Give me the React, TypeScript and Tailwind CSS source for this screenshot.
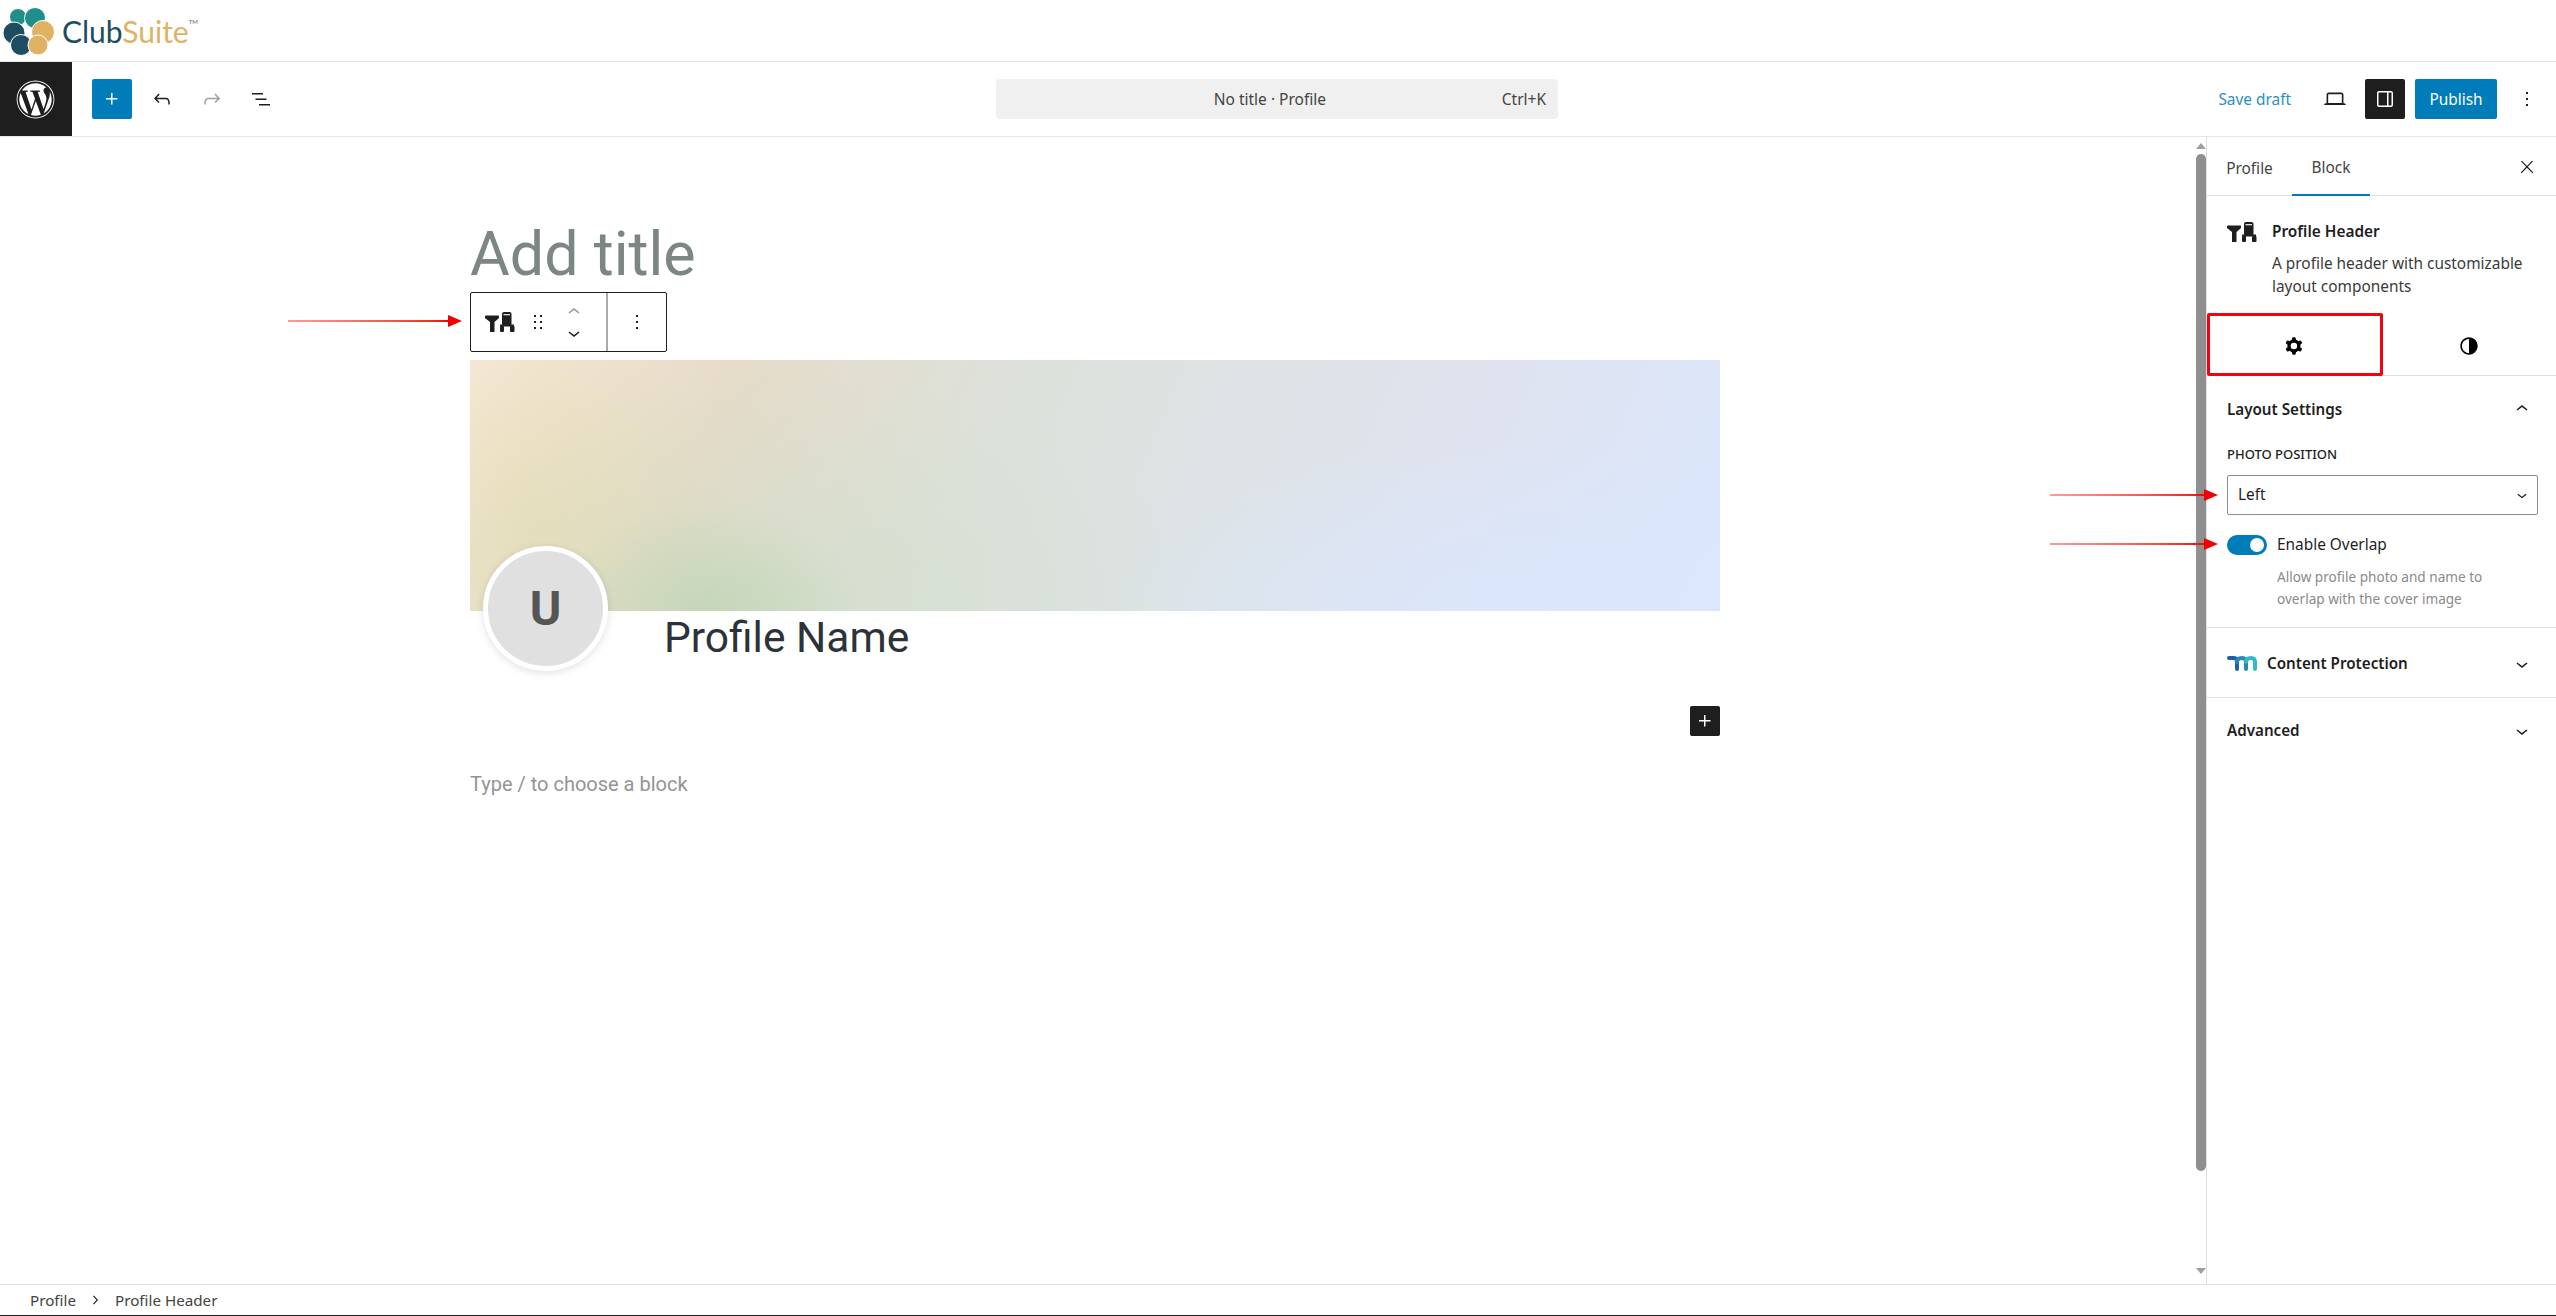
import type { ReactNode } from "react";
import { FaWordpress } from "react-icons/fa";

const ui = "font-['Noto_Sans','Open_Sans',sans-serif]";

function Icon({ d, size = 24, className = "" }: { d: string; size?: number; className?: string }) {
  return (
    <svg viewBox="0 0 24 24" width={size} height={size} fill="currentColor" className={className}>
      <path d={d} fillRule="evenodd" clipRule="evenodd" />
    </svg>
  );
}

const icons = {
  plus: "M11 12.5V17.5H12.5V12.5H17.5V11H12.5V6H11V11H6V12.5H11Z",
  undo: "M18.3 11.7c-.6-.6-1.4-.9-2.3-.9H6.7l2.9-3.3-1.1-1-4.5 5L8.5 16l1-1-2.7-2.7H16c.5 0 .9.2 1.3.5 1 1 1 3.4 1 4.5v.3h1.5v-.2c0-1.5 0-4.3-1.5-5.7z",
  redo: "M15.6 6.5l-1.1 1 2.9 3.3H8c-.9 0-1.7.3-2.3.9-1.4 1.5-1.4 4.2-1.4 5.6v.2h1.5v-.3c0-1.1 0-3.5 1-4.5.3-.3.7-.5 1.3-.5h9.2L14.5 15l1.1 1.1 4.6-4.6-4.6-5z",
  list: "M3 6h11v1.5H3V6Zm3.5 5.5h11V13h-11v-1.5ZM21 17H10v1.5h11V17Z",
  laptop: "M20.5 16h-.7V8c0-1.1-.9-2-2-2H6.2c-1.1 0-2 .9-2 2v8h-.7c-.8 0-1.5.7-1.5 1.5h20c0-.8-.7-1.5-1.5-1.5zM5.7 8c0-.3.2-.5.5-.5h11.6c.3 0 .5.2.5.5v7.6H5.7V8z",
  drawer: "M18 4H6c-1.1 0-2 .9-2 2v12c0 1.1.9 2 2 2h12c1.1 0 2-.9 2-2V6c0-1.1-.9-2-2-2zm-4 14.5H6c-.3 0-.5-.2-.5-.5V6c0-.3.2-.5.5-.5h8v13zm4.5-.5c0 .3-.2.5-.5.5h-2.5v-13H18c.3 0 .5.2.5.5v12z",
  dots: "M13 19h-2v-2h2v2zm0-6h-2v-2h2v2zm0-6h-2V5h2v2z",
  close: "M13 11.8l6.1-6.3-1-1-6.1 6.2-6.1-6.2-1 1 6.1 6.3-6.5 6.7 1 1 6.5-6.6 6.5 6.6 1-1z",
  cog: "M10.289 4.836A1 1 0 0111.275 4h1.306a1 1 0 01.987.836l.244 1.466c.787.26 1.503.679 2.108 1.218l1.393-.522a1 1 0 011.216.437l.653 1.13a1 1 0 01-.23 1.273l-1.148.944a6.025 6.025 0 010 2.435l1.149.946a1 1 0 01.23 1.272l-.653 1.13a1 1 0 01-1.216.437l-1.394-.522c-.605.54-1.32.958-2.108 1.218l-.244 1.466a1 1 0 01-.987.836h-1.306a1 1 0 01-.986-.836l-.244-1.466a5.995 5.995 0 01-2.108-1.218l-1.394.522a1 1 0 01-1.217-.436l-.653-1.131a1 1 0 01.23-1.272l1.149-.946a6.026 6.026 0 010-2.435l-1.148-.944a1 1 0 01-.23-1.272l.653-1.131a1 1 0 011.217-.437l1.393.522a5.994 5.994 0 012.108-1.218l.244-1.466zM14.929 12a3 3 0 11-6 0 3 3 0 016 0z",
  half: "M12 4c-4.4 0-8 3.6-8 8s3.6 8 8 8 8-3.6 8-8-3.6-8-8-8zm0 14.5c-3.6 0-6.5-2.9-6.5-6.5S8.4 5.5 12 5.5v13z",
  up: "M6.5 12.4L12 8l5.5 4.4-.9 1.2L12 10l-4.5 3.6-1-1.2z",
  down: "M17.5 11.6L12 16l-5.5-4.4.9-1.2L12 14l4.5-3.6 1 1.2z",
  right: "M10.6 6L9.4 7l4.6 5-4.6 5 1.2 1 5.4-6z",
  drag: "M8 7h2V5H8v2zm0 6h2v-2H8v2zm0 6h2v-2H8v2zm6-14v2h2V5h-2zm0 8h2v-2h-2v2zm0 6h2v-2h-2v2z",
};

// the header block's own icon: a Y next to a small cylinder on legs
function BlockIcon() {
  return (
    <svg viewBox="0 0 30 20" width={30} height={20} fill="#1e1e1e">
      <path d="M0 4.5 Q0 3.5 1 3.5 L13 3.5 Q14 3.5 14 4.5 L14 6 L9.5 10 L9.5 20 L5 20 L5 10 L0 6 Z" />
      <rect x="17" y="0" width="9.5" height="14" rx="2" />
      <rect x="18.5" y="2" width="6.5" height="1.3" fill="#ddd" />
      <rect x="15" y="12.5" width="14" height="2" />
      <rect x="15" y="14" width="4" height="6" rx="1" />
      <rect x="25" y="14" width="4.5" height="6" rx="1" />
    </svg>
  );
}

function Logo() {
  return (
    <div className="flex items-center">
      <svg viewBox="0 0 56 58" width={56} height={58} stroke="#fff" strokeWidth={1}>
        <circle cx="18" cy="15" r="8.5" fill="#1f9089" />
        <circle cx="35" cy="16" r="10.5" fill="#1f9089" />
        <circle cx="14" cy="31" r="11" fill="#1d4d61" />
        <circle cx="21" cy="43" r="10.5" fill="#1d4d61" />
        <circle cx="43" cy="30" r="11.5" fill="#dfb264" />
        <circle cx="38" cy="43" r="10" fill="#dfb264" />
        <circle cx="29" cy="30" r="3" fill="#fff" stroke="none" />
      </svg>
      <span className="ml-[6px] font-['Lato',sans-serif] text-[30px] leading-none text-[#1d4d61]">
        Club<span className="text-[#dfb264]">Suite</span>
      </span>
      <span className="mb-[18px] font-['Lato',sans-serif] text-[6px] leading-none text-[#666]">TM</span>
    </div>
  );
}

function Toolbar() {
  return (
    <div className="flex h-[76px] border-y border-[#e5e5e5] bg-white">
      <div className="flex w-[72px] items-center justify-center bg-[#1e1e1e] text-white">
        <FaWordpress size={39} className="-ml-[1px]" />
      </div>
      <div className="flex w-[924px] items-center pl-[20px]">
        <div className="flex h-[40px] w-[40px] items-center justify-center rounded-[2px] bg-[#007cba] text-white">
          <Icon d={icons.plus} />
        </div>
        <Icon d={icons.undo} className="ml-[18px] text-[#1e1e1e]" />
        <Icon d={icons.redo} className="ml-[26px] text-[#a0a0a0]" />
        <Icon d={icons.list} className="ml-[25px] text-[#1e1e1e]" />
      </div>
      <div className="my-auto flex h-[40px] w-[562px] items-center rounded-[4px] bg-[#f0f0f0] pr-[12px] pt-[2px] text-[15.5px] text-[#444]">
        <span className="flex-1 pl-[42px] text-center">No title · Profile</span>
        <span>Ctrl+K</span>
      </div>
      <div className="flex flex-1 items-center justify-end pr-[17px]">
        <span className="pt-[2px] text-[15.4px] text-[#2b8fc4]">Save draft</span>
        <Icon d={icons.laptop} size={26} className="ml-[31px] text-[#1e1e1e]" />
        <div className="ml-[17px] flex h-[40px] w-[40px] items-center justify-center rounded-[2px] bg-[#1e1e1e] text-white">
          <Icon d={icons.drawer} />
        </div>
        <div className="ml-[10px] flex h-[40px] w-[82px] items-center justify-center rounded-[2px] bg-[#007cba] pt-[2px] text-[15.4px] text-white">
          Publish
        </div>
        <Icon d={icons.dots} className="ml-[18px] text-[#1e1e1e]" />
      </div>
    </div>
  );
}

function RedArrow({ className }: { className: string }) {
  return (
    <div className={`absolute flex items-center ${className}`}>
      <div className="h-[2px] flex-1 bg-gradient-to-r from-[#ff9a9a] to-[#f00000]" />
      <div className="h-0 w-0 border-y-[6px] border-l-[14px] border-y-transparent border-l-[#f00000]" />
    </div>
  );
}

function BlockToolbar() {
  return (
    <div className="flex h-[60px] w-[197px] rounded-[2px] border border-[#1e1e1e] bg-white">
      <div className="flex flex-1 items-center pl-[14px]">
        <BlockIcon />
        <Icon d={icons.drag} className="ml-[11px] text-[#1e1e1e]" />
        <div className="ml-[12px] flex flex-col items-center">
          <Icon d={icons.up} className="-mb-[3px] text-[#999]" />
          <Icon d={icons.down} className="text-[#1e1e1e]" />
        </div>
      </div>
      <div className="flex w-[60px] items-center justify-center border-l-2 border-[#aaa]">
        <Icon d={icons.dots} className="text-[#1e1e1e]" />
      </div>
    </div>
  );
}

function Canvas() {
  return (
    <div className="relative flex-1 bg-white pr-[5px] font-['Roboto',sans-serif]">
      <RedArrow className="left-[288px] top-[178px] w-[174px]" />
      <div className="mx-auto w-[1250px]">
        <div className="pt-[81px] text-[61px] leading-[72px] text-[#7c8685]">Add title</div>
        <div className="mt-[2px]">
          <BlockToolbar />
        </div>
        <div className="mt-[8px] h-[251px] bg-[radial-gradient(ellipse_150px_110px_at_19%_100%,rgba(190,212,180,0.75),transparent),radial-gradient(ellipse_400px_240px_at_26%_100%,rgba(205,222,200,0.55),transparent),radial-gradient(ellipse_200px_240px_at_5%_68%,rgba(228,218,170,0.6),transparent),radial-gradient(ellipse_420px_170px_at_85%_100%,rgba(218,231,253,0.9),transparent),linear-gradient(112deg,#f6eadb_0%,#e5dbc8_20%,#dde1da_40%,#dde3e6_60%,#dfe3f0_78%,#dbe7fc_98%)]" />
        <div className="flex pl-[13px]">
          <div className="relative z-10 -mt-[65px] flex h-[125px] w-[125px] items-center justify-center rounded-full border-[5px] border-white bg-[#e0e0e0] text-[48px] font-bold text-[#555] shadow-[0_2px_8px_rgba(0,0,0,0.12)]">
            U
          </div>
          <div className="ml-[56px] mt-[3px] text-[42.5px] leading-[48px] text-[#2c3338]">Profile Name</div>
        </div>
        <div className="mt-[35px] flex justify-end">
          <div className="flex h-[30px] w-[30px] items-center justify-center rounded-[2px] bg-[#1e1e1e] text-white">
            <Icon d={icons.plus} />
          </div>
        </div>
        <div className="mt-[34px] text-[20px] leading-[28px] text-[#949494]">Type / to choose a block</div>
      </div>
    </div>
  );
}

function Scrollbar() {
  return (
    <div className="flex w-[11px] flex-col items-center bg-white">
      <div className="mt-[6px] h-0 w-0 border-x-[5px] border-b-[6px] border-x-transparent border-b-[#a0a0a0]" />
      <div className="mt-[5px] h-[1017px] w-[10px] rounded-[5px] bg-[#8f8f8f]" />
      <div className="mt-[97px] h-0 w-0 border-x-[5px] border-t-[6px] border-x-transparent border-t-[#a0a0a0]" />
    </div>
  );
}

function PanelRow({ children, open }: { children: ReactNode; open?: boolean }) {
  return (
    <div className="flex items-center justify-between pr-[2px] text-[15.2px] font-semibold text-[#1e1e1e]">
      {children}
      <Icon d={open ? icons.up : icons.down} />
    </div>
  );
}

function Sidebar() {
  return (
    <div className={`relative w-[350px] border-l border-[#e0e0e0] bg-white ${ui} text-[15.4px] text-[#1e1e1e]`}>
      <div className="flex h-[59px] items-center border-b border-[#e0e0e0]">
        <div className="flex h-full w-[85px] items-center justify-center pt-[5px] text-[15.4px] text-[#444]">Profile</div>
        <div className="flex h-[59px] w-[78px] items-center justify-center border-b-[2px] border-[#007cba] pt-[5px] text-[15.4px] text-[#444]">Block</div>
        <Icon d={icons.close} size={20} className="ml-auto mr-[19px] mt-[1px]" />
      </div>
      <div className="flex px-[20px] pt-[24px]">
        <div className="w-[45px] pt-[2px]">
          <BlockIcon />
        </div>
        <div>
          <div className="font-semibold leading-[23px]">Profile Header</div>
          <div className="mt-[9px] w-[258px] leading-[23px] text-[#3a3a3a]">A profile header with customizable layout components</div>
        </div>
      </div>
      <div className="mt-[15px] flex h-[63px] border-b border-[#e0e0e0] pt-[4px]">
        <div className="flex flex-1 items-center justify-center"><Icon d={icons.cog} size={26} className="text-black" /></div>
        <div className="flex flex-1 items-center justify-center"><Icon d={icons.half} size={26} className="text-black" /></div>
      </div>
      <div className="absolute left-0 top-[176px] h-[63px] w-[176px] rounded-[2px] border-[3px] border-[#f4000f]" />

      <div className="border-b border-[#e0e0e0] px-[20px] pb-[17px] pt-[21px]">
        <PanelRow open>Layout Settings</PanelRow>
        <div className="mt-[25px] text-[13px] font-medium leading-[16px]">PHOTO POSITION</div>
        <div className="mt-[13px] flex h-[40px] w-[311px] items-center justify-between rounded-[2px] border border-[#8d8d8d] pl-[10px] pr-[5px]">
          <span>Left</span>
          <Icon d={icons.down} size={20} />
        </div>
        <div className="mt-[19px] flex items-center">
          <div className="flex h-[20px] w-[40px] items-center justify-end rounded-full bg-[#007cba] pr-[3px]">
            <div className="h-[14px] w-[14px] rounded-full bg-white" />
          </div>
          <span className="ml-[10px] leading-[22px]">Enable Overlap</span>
        </div>
        <div className="ml-[50px] mt-[10px] w-[250px] text-[13.6px] leading-[22px] text-[#8a8a8a]">
          Allow profile photo and name to overlap with the cover image
        </div>
      </div>

      <div className="flex h-[70px] items-center border-b border-[#e0e0e0] pl-[20px] pt-[2px]">
        <div className="flex-1">
          <PanelRow>
            <span className="flex items-center">
              <svg viewBox="0 0 31 17" width={31} height={17} fill="none" strokeWidth={4} strokeLinecap="round" className="mr-[9px]">
                <path d="M2 3 H7 Q10 3 10 7 V14" stroke="#1b5fa8" />
                <path d="M10 7 Q10 3 15 3 Q19 3 19 7 V14" stroke="#2488b8" />
                <path d="M19 7 Q19 3 24 3 Q28 3 28 7 V14" stroke="#35b8c0" />
              </svg>
              Content Protection
            </span>
          </PanelRow>
        </div>
        <div className="w-[20px]" />
      </div>
      <div className="flex h-[65px] items-center pl-[20px]">
        <div className="flex-1">
          <PanelRow>Advanced</PanelRow>
        </div>
        <div className="w-[20px]" />
      </div>
    </div>
  );
}

export default function App() {
  return (
    <div className={`relative flex h-[1316px] flex-col overflow-hidden bg-white ${ui}`}>
      <div className="flex h-[61px] items-center">
        <Logo />
      </div>
      <Toolbar />
      <div className="relative flex flex-1">
        <Canvas />
        <Scrollbar />
        <Sidebar />
        <RedArrow className="left-[2050px] top-[352px] w-[168px]" />
        <RedArrow className="left-[2050px] top-[401px] w-[168px]" />
      </div>
      <div className="flex h-[32px] items-center border-y border-t-[#e0e0e0] border-b-[#1e1e1e] pl-[30px] text-[15.2px] text-[#444]">
        <span>Profile</span>
        <Icon d={icons.right} size={18} className="ml-[10px] text-[#1e1e1e]" />
        <span className="ml-[11px]">Profile Header</span>
      </div>
    </div>
  );
}
